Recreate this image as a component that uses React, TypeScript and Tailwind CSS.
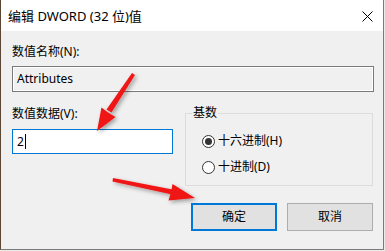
import React from "react";

const font = "font-['Segoe_UI','Noto_Sans','Noto_Sans_CJK_SC',sans-serif]";

const Radio = ({ checked, label }: { checked?: boolean; label: string }) => (
  <div className="flex items-center h-[16px] gap-[3px]">
    <span className="w-[13px] h-[13px] rounded-full border border-[#333333] bg-white flex items-center justify-center">
      {checked && <span className="w-[7px] h-[7px] rounded-full bg-[#333333]" />}
    </span>
    <span className="leading-[16px]">{label}</span>
  </div>
);

const Arrows = () => (
  <svg className="absolute inset-0 pointer-events-none" width="385" height="251" viewBox="0 0 385 251">
    <defs>
      <filter id="sh" x="-30%" y="-30%" width="160%" height="160%">
        <feDropShadow dx="2" dy="2" stdDeviation="2" floodColor="#000" floodOpacity="0.35" />
      </filter>
    </defs>
    <g fill="#f01414" filter="url(#sh)">
      {/* arrow 1: down-left */}
      <polygon points="132,73 135,75 111.5,112.5 106.5,109.5" />
      <polygon points="97,131 101.5,107.5 108,112.5 115.5,117" />
      {/* arrow 2: right */}
      <polygon points="113,178 112.5,181.5 172,194.5 172.5,189.5" />
      <polygon points="195,198 168.5,200.5 171,192.3 172.5,184" />
    </g>
  </svg>
);

export default function App() {
  return (
    <div className={`relative w-[385px] h-[251px] bg-[#ececec] overflow-hidden text-[12px] text-black ${font}`}>
      <div className="w-[384px] h-[250px] flex flex-col bg-[#f0f0f0] border-l border-l-[#5a4634] border-r border-b border-r-[#7a7a7a] border-b-[#7a7a7a]">
        {/* title bar */}
        <div className="h-[31px] bg-white flex items-center justify-between pl-[7px] pr-[10px]">
          <span className="leading-[16px] text-[13px]">编辑 DWORD (32 位)值</span>
          <svg width="11" height="11" viewBox="0 0 11 11" className="mt-[1px]">
            <path d="M0.5 0.5 L10.5 10.5 M10.5 0.5 L0.5 10.5" stroke="#000" strokeWidth="1" />
          </svg>
        </div>

        {/* body */}
        <div className="flex-1 flex flex-col pl-[11px] pr-[9px] pt-[13px]">
          <div className="leading-[16px]">数值名称(N):</div>
          <div className="mt-[6px] h-[26px] border border-[#7a7a7a] bg-[#f0f0f0] shadow-[inset_0_0_0_1px_#ffffff] flex items-center pl-[4px]">
            <span className="leading-[16px]">Attributes</span>
          </div>

          <div className="flex mt-[14px]">
            <div className="w-[161px] flex flex-col">
              <div className="leading-[16px]">数值数据(V):</div>
              <div className="mt-[7px] h-[25px] border border-[#0078d7] bg-white flex items-center pl-[4px]">
                <span className="leading-[16px]">2</span>
                <span className="w-px h-[15px] bg-black ml-[1px]" />
              </div>
            </div>
            <div className="relative ml-[12px] mt-[7px] w-[188px] h-[73px] border border-[#dcdcdc] pl-[16px] pt-[19px] flex flex-col gap-[10px] mr-px">
              <span className="absolute -top-[9px] left-[6px] bg-[#f0f0f0] px-[1px] leading-[16px]">基数</span>
              <Radio checked label="十六进制(H)" />
              <Radio label="十进制(D)" />
            </div>
          </div>

          <div className="flex justify-end gap-[10px] mt-[17px] mr-px">
            <button className="w-[86px] h-[28px] border-2 border-[#0078d7] bg-[#e1e1e1] leading-[16px]">确定</button>
            <button className="w-[86px] h-[28px] border border-[#adadad] bg-[#e1e1e1] leading-[16px]">取消</button>
          </div>
        </div>
      </div>
      <Arrows />
    </div>
  );
}
